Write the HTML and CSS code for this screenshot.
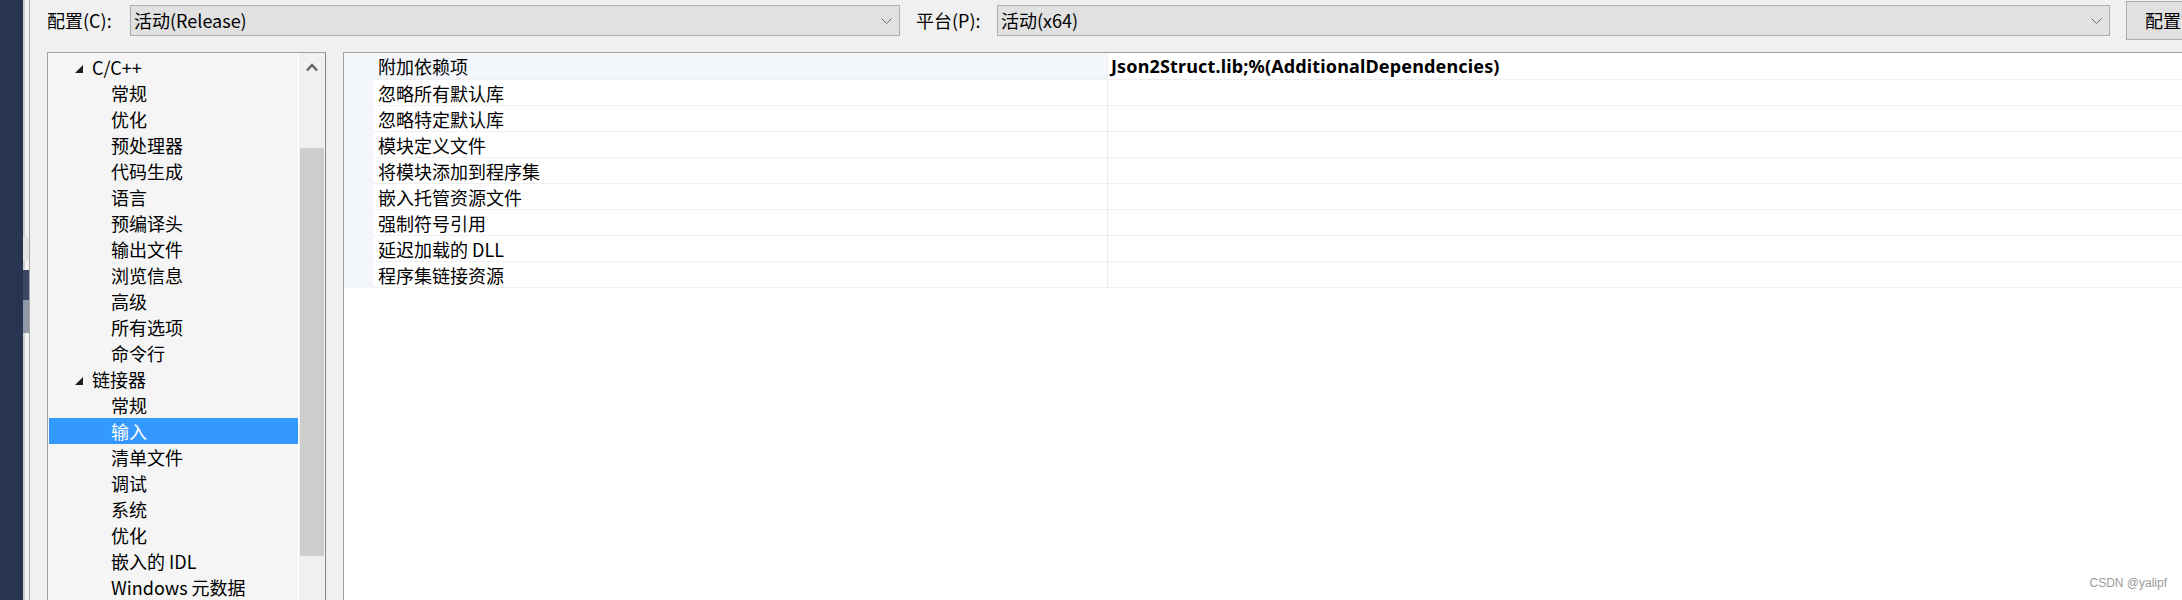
FILE: index.html
```html
<!DOCTYPE html>
<html lang="zh-CN">
<head>
<meta charset="utf-8">
<title>属性页</title>
<link rel="stylesheet" href="styles.css">
</head>
<body>
<div class="app">
  <div class="strip"></div>
  <div class="edge">
    <div class="edge-gap"></div>
    <div class="edge-box"></div>
    <div class="edge-dark"></div>
    <div class="edge-mid"></div>
  </div>
  <div class="main">
    <div class="toolbar">
      <span class="tb-label tb-label-config">配置(C):</span>
      <div class="combo combo-config">
        <span class="combo-text">活动(Release)</span>
        <svg class="combo-arrow" width="11" height="6" viewBox="0 0 11 6"><polyline points="0.5,0.5 5.5,5.5 10.5,0.5" fill="none" stroke="#707070" stroke-width="1"/></svg>
      </div>
      <span class="tb-label tb-label-platform">平台(P):</span>
      <div class="combo combo-platform">
        <span class="combo-text">活动(x64)</span>
        <svg class="combo-arrow" width="11" height="6" viewBox="0 0 11 6"><polyline points="0.5,0.5 5.5,5.5 10.5,0.5" fill="none" stroke="#707070" stroke-width="1"/></svg>
      </div>
      <div class="tb-button">配置管理器(O)...</div>
    </div>
    <div class="content">
      <div class="tree-panel">
        <div class="tree-list">
          <div class="tree-row tree-group"><svg class="tree-tri" width="8" height="8" viewBox="0 0 8 8"><polygon points="8,0 8,8 0,8" fill="#1e1e1e"/></svg><span class="tree-text">C/C++</span></div>
          <div class="tree-row tree-child">常规</div>
          <div class="tree-row tree-child">优化</div>
          <div class="tree-row tree-child">预处理器</div>
          <div class="tree-row tree-child">代码生成</div>
          <div class="tree-row tree-child">语言</div>
          <div class="tree-row tree-child">预编译头</div>
          <div class="tree-row tree-child">输出文件</div>
          <div class="tree-row tree-child">浏览信息</div>
          <div class="tree-row tree-child">高级</div>
          <div class="tree-row tree-child">所有选项</div>
          <div class="tree-row tree-child">命令行</div>
          <div class="tree-row tree-group"><svg class="tree-tri" width="8" height="8" viewBox="0 0 8 8"><polygon points="8,0 8,8 0,8" fill="#1e1e1e"/></svg><span class="tree-text">链接器</span></div>
          <div class="tree-row tree-child">常规</div>
          <div class="tree-row tree-child is-selected">输入</div>
          <div class="tree-row tree-child">清单文件</div>
          <div class="tree-row tree-child">调试</div>
          <div class="tree-row tree-child">系统</div>
          <div class="tree-row tree-child">优化</div>
          <div class="tree-row tree-child">嵌入的 IDL</div>
          <div class="tree-row tree-child">Windows 元数据</div>
        </div>
        <div class="scrollbar">
          <div class="scroll-up">
            <svg width="12" height="9" viewBox="0 0 12 9"><polyline points="1,7.5 6,2 11,7.5" fill="none" stroke="#606060" stroke-width="2.2"/></svg>
          </div>
          <div class="scroll-thumb"></div>
        </div>
      </div>
      <div class="grid-panel">
        <div class="prop-row is-current"><div class="prop-gutter"></div><div class="prop-name">附加依赖项</div><div class="prop-value">Json2Struct.lib;%(AdditionalDependencies)</div></div>
        <div class="prop-row"><div class="prop-gutter"></div><div class="prop-name">忽略所有默认库</div><div class="prop-value"></div></div>
        <div class="prop-row"><div class="prop-gutter"></div><div class="prop-name">忽略特定默认库</div><div class="prop-value"></div></div>
        <div class="prop-row"><div class="prop-gutter"></div><div class="prop-name">模块定义文件</div><div class="prop-value"></div></div>
        <div class="prop-row"><div class="prop-gutter"></div><div class="prop-name">将模块添加到程序集</div><div class="prop-value"></div></div>
        <div class="prop-row"><div class="prop-gutter"></div><div class="prop-name">嵌入托管资源文件</div><div class="prop-value"></div></div>
        <div class="prop-row"><div class="prop-gutter"></div><div class="prop-name">强制符号引用</div><div class="prop-value"></div></div>
        <div class="prop-row"><div class="prop-gutter"></div><div class="prop-name">延迟加载的 DLL</div><div class="prop-value"></div></div>
        <div class="prop-row"><div class="prop-gutter"></div><div class="prop-name">程序集链接资源</div><div class="prop-value"></div></div>
      </div>
    </div>
  </div>
</div>
<div class="watermark">CSDN @yalipf</div>
</body>
</html>
```

FILE: styles.css
```css
html, body {
  margin: 0;
  padding: 0;
}
body {
  width: 2182px;
  height: 600px;
  overflow: hidden;
  background: #f0f0f0;
  font-family: "Noto Sans CJK SC", "Noto Sans", sans-serif;
  font-size: 18px;
  color: #000;
  position: relative;
}
.app {
  display: flex;
  height: 600px;
}
.strip {
  width: 23px;
  flex-shrink: 0;
  background: #283551;
}
.edge {
  width: 6px;
  flex-shrink: 0;
  background: #f2f2f2;
  border-right: 1px solid #a5a5a5;
  box-shadow: inset 2px 0 0 #d0d0d0;
  display: flex;
  flex-direction: column;
}
.edge-gap { height: 237px; }
.edge-box { height: 23px; background: #e4e4e4; }
.edge-dark { margin-top: 10px; height: 30px; background: #3a4663; }
.edge-mid { height: 33px; background: #8e96a8; }
.main {
  flex: 1;
  min-width: 0;
  overflow: hidden;
  display: flex;
  flex-direction: column;
}
.toolbar {
  height: 41px;
  margin-bottom: 11px;
  padding-left: 17px;
  display: flex;
  align-items: center;
  flex-shrink: 0;
}
.tb-label {
  flex-shrink: 0;
  height: 29px;
  line-height: 29px;
  white-space: nowrap;
}
.tb-label-config { width: 83px; }
.tb-label-platform { width: 81px; margin-left: 16px; }
.combo {
  flex-shrink: 0;
  box-sizing: border-box;
  height: 31px;
  line-height: 29px;
  background: #e1e1e1;
  border: 1px solid #adadad;
  padding: 0 7px 0 3px;
  display: flex;
  align-items: center;
  justify-content: space-between;
}
.combo-config { width: 770px; }
.combo-platform { width: 1113px; }
.combo-arrow { display: block; }
.tb-button {
  flex-shrink: 0;
  box-sizing: border-box;
  width: 180px;
  height: 39px;
  margin-left: 16px;
  line-height: 37px;
  padding-left: 18px;
  background: #e1e1e1;
  border: 1px solid #adadad;
  white-space: nowrap;
}
.content {
  flex: 1;
  display: flex;
  padding-left: 17px;
  gap: 17px;
  min-height: 0;
}
.tree-panel {
  flex-shrink: 0;
  width: 279px;
  height: 560px;
  box-sizing: border-box;
  border-top: 1px solid #a0a0a0;
  border-left: 1px solid #a0a0a0;
  border-right: 1px solid #858585;
  display: flex;
}
.tree-list {
  width: 250px;
  box-sizing: border-box;
  padding: 1px 0 0 1px;
  background: #f5f5f5;
  overflow: hidden;
}
.tree-row {
  height: 26px;
  line-height: 26px;
  white-space: nowrap;
  display: flex;
}
.tree-group { padding-left: 26px; }
.tree-tri {
  flex-shrink: 0;
  margin-top: 11px;
  margin-right: 9px;
}
.tree-child { padding-left: 62px; }
.tree-row.is-selected {
  background: #3399ff;
  color: #fff;
}
.scrollbar {
  width: 26px;
  border-left: 1px solid #ffffff;
  background: #f0f0f0;
  display: flex;
  flex-direction: column;
  align-items: center;
}
.scroll-up {
  height: 32px;
  width: 26px;
  display: flex;
  justify-content: center;
  padding-top: 10px;
  box-sizing: border-box;
}
.scroll-up svg { display: block; }
.scroll-thumb {
  margin-top: 63px;
  width: 24px;
  height: 408px;
  background: #cdcdcd;
}
.grid-panel {
  flex: 1;
  min-width: 1850px;
  height: 560px;
  background: #ffffff;
  border-top: 1px solid #a0a0a0;
  border-left: 1px solid #a0a0a0;
}
.prop-row {
  display: flex;
  height: 26px;
}
.prop-row:first-child { height: 27px; }
.prop-gutter {
  width: 29px;
  flex-shrink: 0;
  background: #f3f6fb;
}
.prop-name {
  width: 735px;
  flex-shrink: 0;
  box-sizing: border-box;
  padding-left: 5px;
  line-height: 26px;
  border-bottom: 1px solid #f0f0f0;
  border-right: 1px solid #eeeeee;
  white-space: nowrap;
}
.prop-row.is-current .prop-name { background: #f3f6fb; }
.prop-value {
  flex: 1;
  box-sizing: border-box;
  padding-left: 3px;
  line-height: 26px;
  border-bottom: 1px solid #f0f0f0;
  font-family: "Noto Sans", "Noto Sans CJK SC", sans-serif;
  font-weight: bold;
  font-size: 18px;
  letter-spacing: 0.15px;
  white-space: nowrap;
}
.watermark {
  position: absolute;
  right: 15px;
  bottom: 10px;
  font-family: "Liberation Sans", Arial, sans-serif;
  font-size: 12px;
  line-height: 14px;
  color: #9a9a9a;
}
```
